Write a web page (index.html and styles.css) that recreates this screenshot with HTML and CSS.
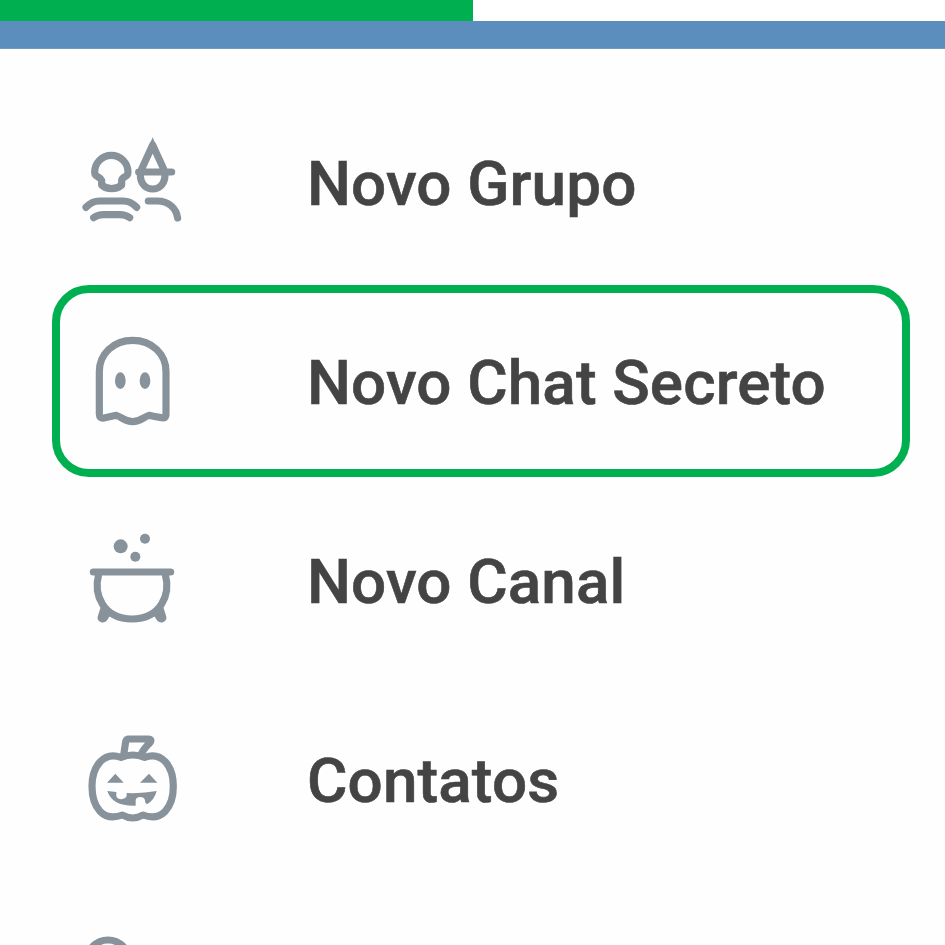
FILE: index.html
```html
<!DOCTYPE html>
<html lang="pt-BR">
<head>
<meta charset="utf-8">
<title>Menu</title>
<link rel="stylesheet" href="styles.css">
</head>
<body>
<div class="progress"><div class="progress-fill"></div></div>
<header class="bar"></header>
<nav class="menu">
  <a class="item">
    <svg class="icon" viewBox="0 -12 360 330">
      <path d="M89 165V151Q87 146 77 140Q68 136 68 126A50 50 0 0 1 168 126Q168 136 159 140Q149 146 149 151V165Q137 176 119 176Q101 176 89 165Z"/>
      <path d="M209 117L242 45L275 117M200 126H299M205 134C205 162 222 177 242 177S279 162 279 134"/>
      <path class="solid" d="M242 22L254 50H230Z"/>
      <path d="M42 232Q60 213 82 213H154Q176 213 194 232M65 263Q78 254 94 254H144Q160 254 173 263M229 213H256C290 213 313 235 317 264"/>
    </svg>
    <span class="label">Novo Grupo</span>
  </a>
  <a class="item selected">
    <svg class="icon" viewBox="0 0 360 330">
      <path d="M82 140C82 86 125 46 182 46S282 86 282 140V268Q282 282 268 278Q247 275 231 271C214 276 206 290 182 290S150 276 133 271Q117 275 96 279Q82 281 82 268Z"/>
      <ellipse class="solid" cx="145" cy="167" rx="16" ry="25"/>
      <ellipse class="solid" cx="219" cy="167" rx="16" ry="25"/>
    </svg>
    <span class="label">Novo Chat Secreto</span>
  </a>
  <a class="item">
    <svg class="icon" viewBox="0 -3 360 330">
      <circle class="solid" cx="146" cy="64" r="21"/>
      <circle class="solid" cx="219" cy="41" r="15"/>
      <circle class="solid" cx="190" cy="95" r="15"/>
      <path d="M64 141H296M80 148C64 208 93 282 180 282S296 208 280 148"/>
      <path class="solid" d="M88 240L77 275C74 292 98 299 106 284L117 268ZM272 240L283 275C286 292 262 299 254 284L243 268Z"/>
    </svg>
    <span class="label">Novo Canal</span>
  </a>
  <a class="item">
    <svg class="icon" viewBox="0 -6 360 330">
      <path d="M155 90L161 50Q163 42 171 42H229Q241 42 234 53Q214 72 206 91"/>
      <path d="M147 97C95 78 60 124 60 184C60 247 93 291 151 270Q182 288 213 270C270 291 304 247 304 184C304 124 270 78 218 97Q182 83 147 97Z"/>
      <path class="solid" d="M105 173L130 146L155 173ZM204 173L231 146L256 173Z"/>
      <path class="solid" d="M106 198L133 201V212C133 226 163 226 164 211V204Q212 206 254 198Q247 225 226 237Q219 237 219 226C217 213 192 213 191 226V242Q120 244 106 198Z"/>
    </svg>
    <span class="label">Contatos</span>
  </a>
  <a class="item cut">
    <svg class="icon" viewBox="0 -9 360 330">
      <circle cx="108" cy="108" r="63"/>
    </svg>
  </a>
</nav>
</body>
</html>
```
FILE: styles.css
```css
* { box-sizing: border-box; }
body {
  margin: 0;
  height: 945px;
  overflow: hidden;
  background: #fefefe;
  font-family: Roboto, sans-serif;
}
.progress { height: 21px; background: #fff; }
.progress-fill { width: 473px; height: 21px; background: #00b050; }
.bar {
  height: 28px;
  background: #5b8ebc;
  border-bottom: 1px solid #6f9bc2;
}
.menu { padding-top: 34px; }
.item {
  display: flex;
  align-items: flex-start;
  height: 199px;
  padding: 43px 0 0 72px;
}
.selected {
  height: 192px;
  margin: 3px 35px 4px 52px;
  padding: 32px 0 0 12px;
  border: 8px solid #00b050;
  border-radius: 37px;
}
.cut { height: 66px; overflow: hidden; }
.icon {
  flex: none;
  width: 120px;
  height: 110px;
  fill: none;
  stroke: #87929a;
  stroke-width: 21.5;
  stroke-linecap: round;
  stroke-linejoin: round;
}
.solid { fill: #87929a; stroke: none; }
.label {
  margin: 21px 0 0 115px;
  font-size: 62px;
  line-height: 74px;
  font-weight: 500;
  letter-spacing: 0.12px;
  -webkit-text-stroke: 0.6px #444;
  color: #444;
  white-space: nowrap;
}
```
